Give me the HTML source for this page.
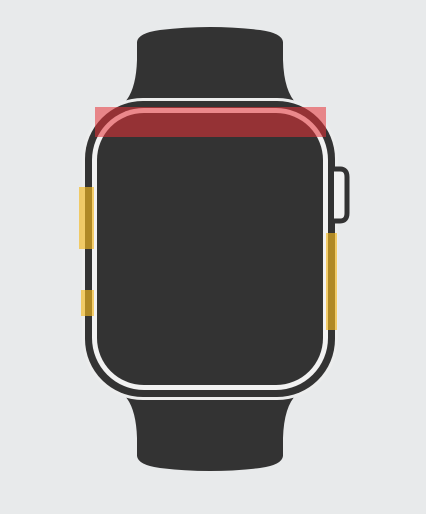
<!DOCTYPE html>
<html><head><style>
html,body{margin:0;padding:0;background:#e8eaeb;}
svg{display:block}
</style></head><body>
<svg width="426" height="514" viewBox="0 0 426 514" xmlns="http://www.w3.org/2000/svg">
<rect width="426" height="514" fill="#e8eaeb"/>
<!-- top strap -->
<path d="M137 42 Q138 33 160 30 Q210 24 260 30 Q282 33 283 42 L283 60 Q284 92 297 104 L123 104 Q136 92 137 60 Z" fill="#333"/>
<!-- bottom strap -->
<path d="M123 394 L297 394 Q284 406 283 438 L283 456 Q282 465 260 468 Q210 474 160 468 Q138 465 137 456 L137 438 Q136 406 123 394 Z" fill="#333"/>
<!-- gap -->
<rect x="82" y="98" width="256" height="302" rx="61" fill="#eceded"/>
<!-- case -->
<rect x="85" y="101" width="250" height="296" rx="58" fill="#333"/>
<rect x="92" y="108" width="236" height="282" rx="52" fill="#f2f2f2"/>
<rect x="97" y="113" width="226" height="272" rx="47" fill="#333"/>
<!-- crown -->
<path d="M334 169 L340 169 Q347 169 347 177 L347 213 Q347 221 340 221 L334 221" fill="#f2f2f2" stroke="#333" stroke-width="5"/>
<rect x="328" y="170" width="6" height="50" fill="#333"/>
<!-- overlays -->
<rect x="95" y="107" width="231" height="30" fill="rgba(230,50,55,0.55)"/>
<rect x="79" y="187" width="15" height="62" fill="rgba(245,185,30,0.65)"/>
<rect x="81" y="290" width="13" height="26" fill="rgba(245,185,30,0.65)"/>
<rect x="326" y="233" width="11" height="97" fill="rgba(245,185,30,0.65)"/>
</svg>
</body></html>
